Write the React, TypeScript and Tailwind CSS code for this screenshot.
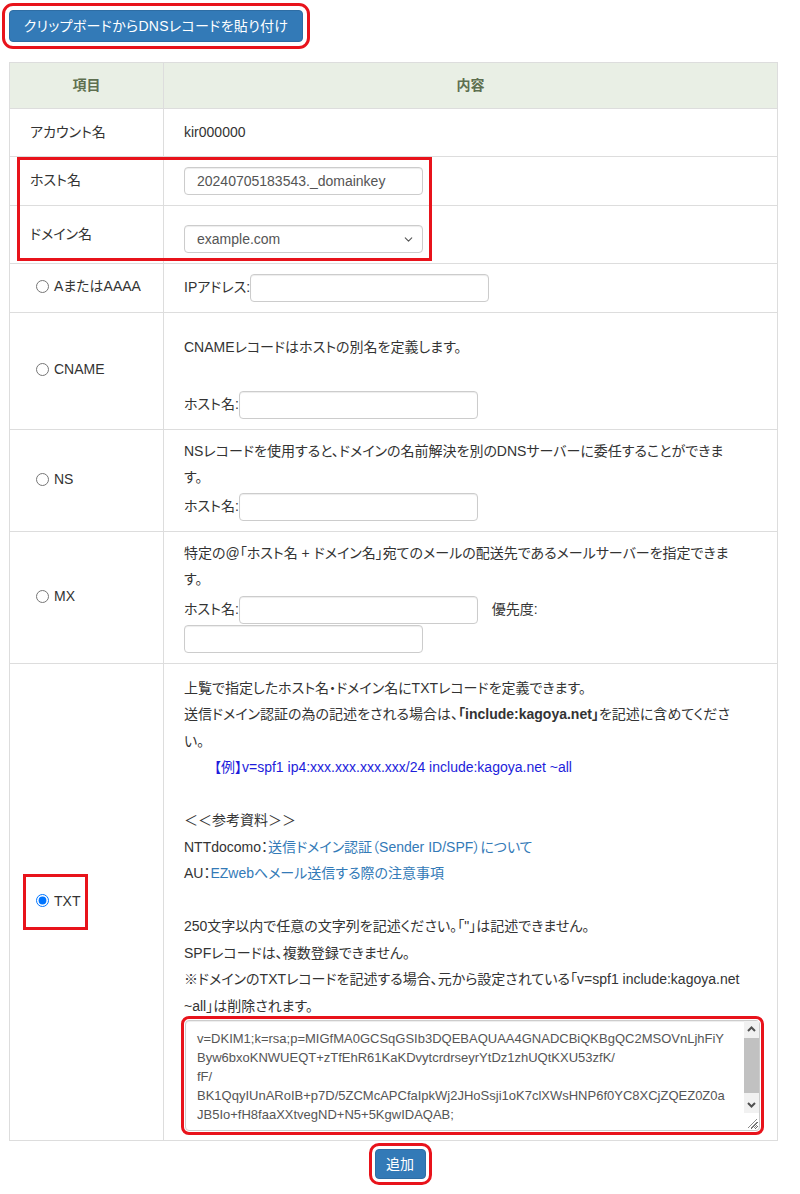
import { ChevronDown } from 'lucide-react';

const DKIM =
  'v=DKIM1;k=rsa;p=MIGfMA0GCSqGSIb3DQEBAQUAA4GNADCBiQKBgQC2MSOVnLjhFiY\n' +
  'Byw6bxoKNWUEQT+zTfEhR61KaKDvytcrdrseyrYtDz1zhUQtKXU53zfK/\n' +
  'fF/\n' +
  'BK1QqyIUnARoIB+p7D/5ZCMcAPCfaIpkWj2JHoSsji1oK7clXWsHNP6f0YC8XCjZQEZ0Z0a\n' +
  'JB5Io+fH8faaXXtvegND+N5+5KgwIDAQAB;';

function TextInput({ value = '', className = '' }: { value?: string; className?: string }) {
  return (
    <input
      type="text"
      defaultValue={value}
      className={
        'block h-[28px] w-[239px] rounded-[4px] border border-[#cccccc] bg-white px-[12px] text-[14px] leading-[20px] text-[#555] shadow-[inset_0_1px_1px_rgba(0,0,0,0.075)] ' +
        className
      }
    />
  );
}

function Radio({ label, checked = false }: { label: string; checked?: boolean }) {
  return (
    <label className="inline-flex items-center whitespace-nowrap">
      <input type="radio" name="rtype" defaultChecked={checked} className="m-0 mr-[5px] h-[13px] w-[13px]" />
      <span>{label}</span>
    </label>
  );
}

export default function App() {
  const cell = 'border border-[#dddddd]';
  const left = cell + ' w-[154px] pl-[20px] align-middle';
  const radioCell = cell + ' w-[154px] pl-[26px] align-middle';
  const right = cell + ' pl-[20px] pr-[10px] align-top whitespace-nowrap';
  const field = 'flex h-[28px] items-center';

  return (
    <div className="min-h-[1194px] bg-white font-['Liberation_Sans','Noto_Sans_CJK_JP',sans-serif] text-[14px] leading-[26.5px] text-[#333] [font-feature-settings:'palt']">
      <div className="pl-[9px] pt-[10px]">
        <button className="h-[32px] w-[294px] rounded-[4px] border border-[#2e6da4] bg-[#337ab7] text-[14px] leading-[20px] tracking-[0.3px] text-white outline-3 outline-solid outline-offset-4 outline-[#e8131b]">
          クリップボードからDNSレコードを貼り付け
        </button>
      </div>

      <div className="relative ml-[9px] mt-[20px] w-[769px]">
        <table className="w-[769px] border-collapse">
          <tbody>
            <tr className="h-[46px] bg-[#e9efe5]">
              <th className={cell + ' w-[154px] text-center font-bold text-[#5e6f50]'}>項目</th>
              <th className={cell + ' text-center font-bold text-[#5e6f50]'}>内容</th>
            </tr>
            <tr>
              <td className={left}>アカウント名</td>
              <td className={right + ' py-[10px]'}>kir000000</td>
            </tr>
            <tr>
              <td className={left}>ホスト名</td>
              <td className={right + ' py-[10px]'}>
                <TextInput value="20240705183543._domainkey" />
              </td>
            </tr>
            <tr>
              <td className={left}>ドメイン名</td>
              <td className={right + ' pb-[10px] pt-[19px]'}>
                <div className="relative w-[239px]">
                  <select className="block h-[28px] w-[239px] appearance-none rounded-[4px] border border-[#cccccc] bg-white px-[12px] text-[14px] leading-[20px] text-[#555] shadow-[inset_0_1px_1px_rgba(0,0,0,0.075)]">
                    <option>example.com</option>
                  </select>
                  <ChevronDown className="pointer-events-none absolute right-[8px] top-[8px] h-[13px] w-[13px] text-[#555]" strokeWidth={2} />
                </div>
              </td>
            </tr>
            <tr>
              <td className={radioCell}>
                <Radio label="AまたはAAAA" />
              </td>
              <td className={right + ' py-[10px]'}>
                <div className={field}>
                  IPアドレス:<TextInput />
                </div>
              </td>
            </tr>
            <tr>
              <td className={radioCell}>
                <Radio label="CNAME" />
              </td>
              <td className={right + ' pb-[10px] pt-[21px]'}>
                <div>CNAMEレコードはホストの別名を定義します。</div>
                <div className="h-[26.5px]" />
                <div className={field + ' mt-[4px]'}>
                  ホスト名:<TextInput />
                </div>
              </td>
            </tr>
            <tr>
              <td className={radioCell}>
                <Radio label="NS" />
              </td>
              <td className={right + ' pb-[10px] pt-[8px]'}>
                <div>
                  NSレコードを使用すると、ドメインの名前解決を別のDNSサーバーに委任することができま
                  <br />す。
                </div>
                <div className={field + ' mt-[2px]'}>
                  ホスト名:<TextInput />
                </div>
              </td>
            </tr>
            <tr>
              <td className={radioCell}>
                <Radio label="MX" />
              </td>
              <td className={right + ' pb-[10px] pt-[8px]'}>
                <div>
                  特定の@「ホスト名 + ドメイン名」宛てのメールの配送先であるメールサーバーを指定できま
                  <br />す。
                </div>
                <div className={field + ' mt-[3px]'}>
                  ホスト名:<TextInput />
                  <span className="ml-[14px]">優先度:</span>
                </div>
                <div className={field + ' mt-px'}>
                  <TextInput />
                </div>
              </td>
            </tr>
            <tr>
              <td className={radioCell}>
                <span className="relative inline-block">
                  <Radio label="TXT" checked />
                  <span className="pointer-events-none absolute -bottom-[14px] -left-[13px] -top-[14px] w-[65px] border-[3px] border-[#e8131b]" />
                </span>
              </td>
              <td className={right + ' pb-[9px] pt-[11px]'}>
                <div>上覧で指定したホスト名・ドメイン名にTXTレコードを定義できます。</div>
                <div>
                  送信ドメイン認証の為の記述をされる場合は、<b>「include:kagoya.net」</b>を記述に含めてくださ
                  <br />い。
                </div>
                <div className="pl-[30px] text-[#1d1ddb]">【例】v=spf1 ip4:xxx.xxx.xxx.xxx/24 include:kagoya.net ~all</div>
                <div className="h-[26.5px]" />
                <div>＜＜参考資料＞＞</div>
                <div>
                  NTTdocomo：<a className="text-[#337ab7]">送信ドメイン認証（Sender ID/SPF）について</a>
                </div>
                <div>
                  AU：<a className="text-[#337ab7]">EZwebへメール送信する際の注意事項</a>
                </div>
                <div className="h-[26.5px]" />
                <div>250文字以内で任意の文字列を記述ください。「"」は記述できません。</div>
                <div>SPFレコードは、複数登録できません。</div>
                <div>
                  ※ドメインのTXTレコードを記述する場合、元から設定されている「v=spf1 include:kagoya.net
                  <br />~all」は削除されます。
                </div>
                <div className="relative ml-px mt-px w-[575px]">
                  <textarea
                    defaultValue={DKIM}
                    wrap="off"
                    className="block h-[111px] w-[575px] overflow-hidden whitespace-pre rounded-[4px] border border-[#cccccc] bg-white pb-[6px] pl-[11px] pr-[20px] pt-[8px] text-[13px] leading-[19px] text-[#555] shadow-[inset_0_1px_1px_rgba(0,0,0,0.075)] outline-3 outline-solid outline-offset-1 outline-[#e8131b]"
                  />
                  {/* fake scrollbar, the page shot shows a classic one */}
                  <div className="pointer-events-none absolute right-px top-px flex h-[92px] w-[15px] flex-col items-center bg-[#f1f1f1]">
                    <svg width="15" height="17" viewBox="0 0 15 17" className="shrink-0">
                      <path d="M4 10 L7.5 6.5 L11 10" fill="none" stroke="#505050" strokeWidth="2" />
                    </svg>
                    <div className="h-[55px] w-[15px] shrink-0 bg-[#c1c1c1]" />
                    <div className="flex-1" />
                    <svg width="15" height="17" viewBox="0 0 15 17" className="shrink-0">
                      <path d="M4 7 L7.5 10.5 L11 7" fill="none" stroke="#505050" strokeWidth="2" />
                    </svg>
                  </div>
                  <svg width="12" height="12" viewBox="0 0 12 12" className="pointer-events-none absolute bottom-[2px] right-[2px]">
                    <path d="M11 2 L2 11 M11 5 L5 11 M11 8 L8 11" stroke="#8a8a8a" strokeWidth="1" />
                  </svg>
                </div>
              </td>
            </tr>
          </tbody>
        </table>
        <div className="pointer-events-none absolute left-[8px] top-[95px] h-[104px] w-[415px] border-[3px] border-[#e8131b]" />
      </div>

      <div className="mt-[8px] flex justify-center">
        <button className="h-[30px] w-[51px] rounded-[4px] border border-[#2e6da4] bg-[#337ab7] text-[14px] leading-[20px] text-white outline-3 outline-solid outline-offset-3 outline-[#e8131b]">
          追加
        </button>
      </div>
    </div>
  );
}
